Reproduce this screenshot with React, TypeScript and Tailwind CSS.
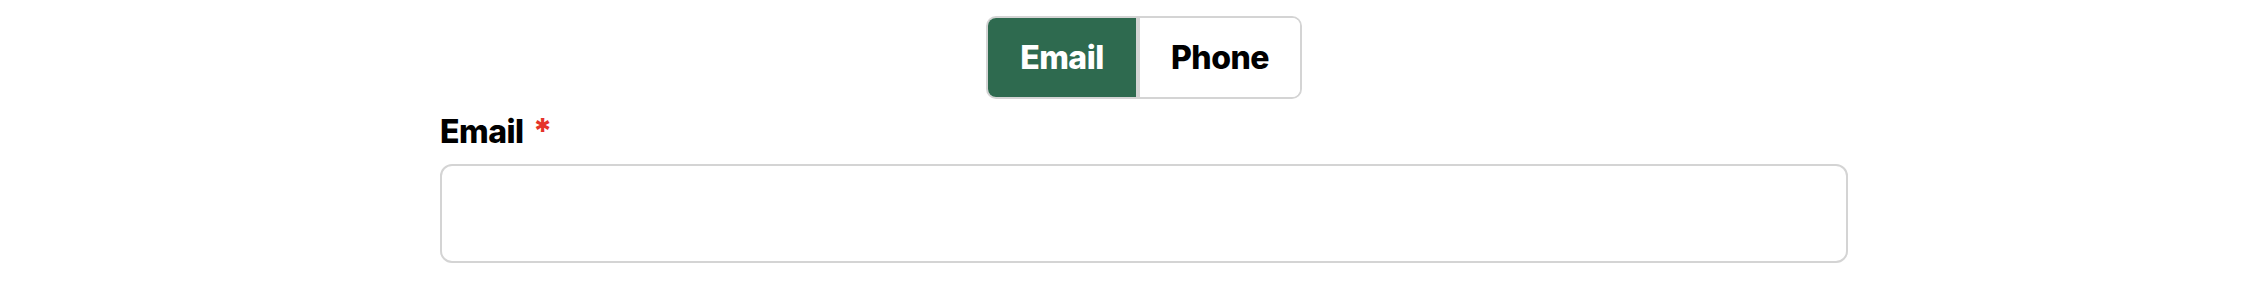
import { useState } from "react";

export default function App() {
  const [mode, setMode] = useState<"email" | "phone">("email");
  const [value, setValue] = useState("");

  return (
    <div className="min-h-[285px] bg-white font-['Inter','Liberation_Sans',sans-serif] text-black">
      <div className="ml-[440px] w-[1408px] pt-4">
        <div className="flex justify-center">
          <div className="flex h-[83px] overflow-hidden rounded-[10px] border-2 border-[#d4d4d4]">
            <button
              onClick={() => setMode("email")}
              className={`flex w-[148px] items-center justify-center text-[32px] font-extrabold tracking-[-0.5px] ${
                mode === "email" ? "bg-[#2e6a4f] text-white" : "bg-white text-black"
              }`}
            >
              Email
            </button>
            <button
              onClick={() => setMode("phone")}
              className={`flex w-[164px] items-center justify-center border-l-4 border-[#d4d4d4] text-[32px] font-extrabold tracking-[-0.5px] ${
                mode === "phone" ? "bg-[#2e6a4f] text-white" : "bg-white text-black"
              }`}
            >
              Phone
            </button>
          </div>
        </div>

        <label className="mt-[12px] block text-[32px] leading-[40px] font-extrabold tracking-[-0.5px]">
          {mode === "email" ? "Email" : "Phone"}
          <span className="ml-[9px] text-[34px] font-extrabold text-[#e5332a]">*</span>
        </label>

        <input
          type={mode === "email" ? "email" : "tel"}
          value={value}
          onChange={(e) => setValue(e.target.value)}
          className="mt-3 block h-[99px] w-full rounded-[12px] border-2 border-[#d4d4d4] px-5 text-[28px] outline-none"
        />
      </div>
    </div>
  );
}
